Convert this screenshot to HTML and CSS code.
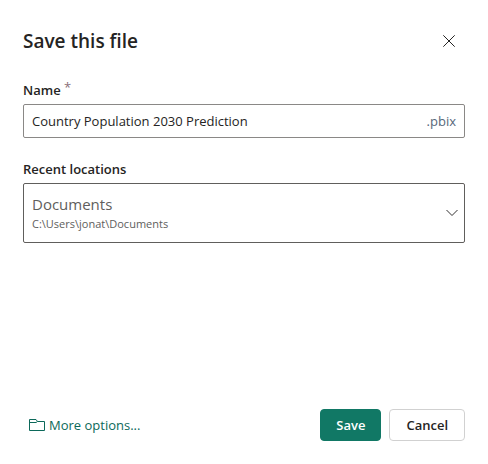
FILE: index.html
```html
<!DOCTYPE html>
<html lang="en">
<head>
<meta charset="utf-8">
<meta name="viewport" content="width=device-width, initial-scale=1">
<title>Save this file</title>
<link rel="stylesheet" href="styles.css">
</head>
<body>
<form class="dialog">
  <header class="header">
    <h1 class="title">Save this file</h1>
    <button class="close" type="button" aria-label="Close">
      <svg width="12" height="12" viewBox="0 0 12 12" aria-hidden="true"><path d="M0.3 0.3 11.7 11.7M11.7 0.3 0.3 11.7"/></svg>
    </button>
  </header>

  <div class="field">
    <label class="label" for="name">Name <span class="required">*</span></label>
    <div class="textbox">
      <input class="input" id="name" type="text" value="Country Population 2030 Prediction" required>
      <span class="suffix">.pbix</span>
    </div>
  </div>

  <div class="field">
    <label class="label" for="location">Recent locations</label>
    <div class="picker">
      <select class="select" id="location" aria-describedby="path">
        <option>Documents</option>
      </select>
      <span class="path" id="path">C:\Users\jonat\Documents</span>
      <svg class="chevron" width="12" height="8" viewBox="0 0 12 8" aria-hidden="true"><path d="M0.5 1 6 6.5 11.5 1"/></svg>
    </div>
  </div>

  <footer class="footer">
    <a class="more" href="#">
      <svg width="16" height="12" viewBox="0 0 16 12" aria-hidden="true"><path d="M0.5 11.5V0.5H7L8.5 2.5H15.5V11.5ZM0.5 3.5H7L8.5 2.5"/></svg>
      More options...
    </a>
    <button class="button primary" type="submit">Save</button>
    <button class="button" type="button">Cancel</button>
  </footer>
</form>
</body>
</html>
```

FILE: styles.css
```css
* {
  box-sizing: border-box;
}

body {
  margin: 0;
  background: #fff;
  color: #252423;
  font: 13px/20px "Open Sans", "Noto Sans", sans-serif;
}

button,
input,
select {
  margin: 0;
  font: inherit;
  color: inherit;
}

svg {
  fill: none;
  stroke: currentColor;
}

.dialog {
  display: flex;
  flex-direction: column;
  min-height: 100vh;
  padding: 24px 23px 23px;
}

.header {
  display: flex;
  align-items: center;
  justify-content: space-between;
  height: 34px;
  margin-bottom: 22px;
}

.title {
  margin: 0;
  font-size: 19px;
  line-height: 28px;
  font-weight: 600;
}

.close {
  display: grid;
  place-items: center;
  width: 32px;
  height: 32px;
  padding: 0;
  border: 0;
  background: none;
}

.field {
  margin-bottom: 21px;
}

.label {
  display: block;
  margin-bottom: 4px;
  font-weight: 600;
}

.required {
  color: #8a7078;
  font-weight: 400;
  line-height: 1;
  vertical-align: 3px;
}

.textbox {
  display: flex;
  align-items: center;
  height: 34px;
  padding: 0 8px;
  border: 1px solid #8a8886;
  border-radius: 2px;
}

.input {
  flex: 1;
  min-width: 0;
  padding: 0;
  border: 0;
  outline: 0;
  background: none;
}

.suffix {
  color: #56687a;
}

.picker {
  display: grid;
  color: #605e5c;
}

.picker > * {
  grid-area: 1 / 1;
}

.select {
  width: 100%;
  height: 60px;
  padding: 0 32px 19px 8px;
  appearance: none;
  border: 1px solid #605e5c;
  border-radius: 2px;
  background: none;
  font-size: 15px;
}

.path {
  align-self: end;
  padding: 0 9px 9px;
  font-size: 11px;
  pointer-events: none;
}

.chevron {
  place-self: center end;
  margin-right: 7px;
  color: #323130;
  pointer-events: none;
}

.footer {
  display: flex;
  align-items: center;
  gap: 8px;
  margin-top: auto;
}

.more {
  display: flex;
  align-items: center;
  gap: 4px;
  margin: 0 auto 0 6px;
  color: #0c695a;
  text-decoration: none;
}

.button {
  height: 32px;
  padding: 0 16px;
  border: 1px solid #d1d1d1;
  border-radius: 4px;
  background: #fff;
  font-weight: 600;
}

.primary {
  padding: 0 15px;
  border-color: #117865;
  background: #117865;
  color: #fff;
}
```
